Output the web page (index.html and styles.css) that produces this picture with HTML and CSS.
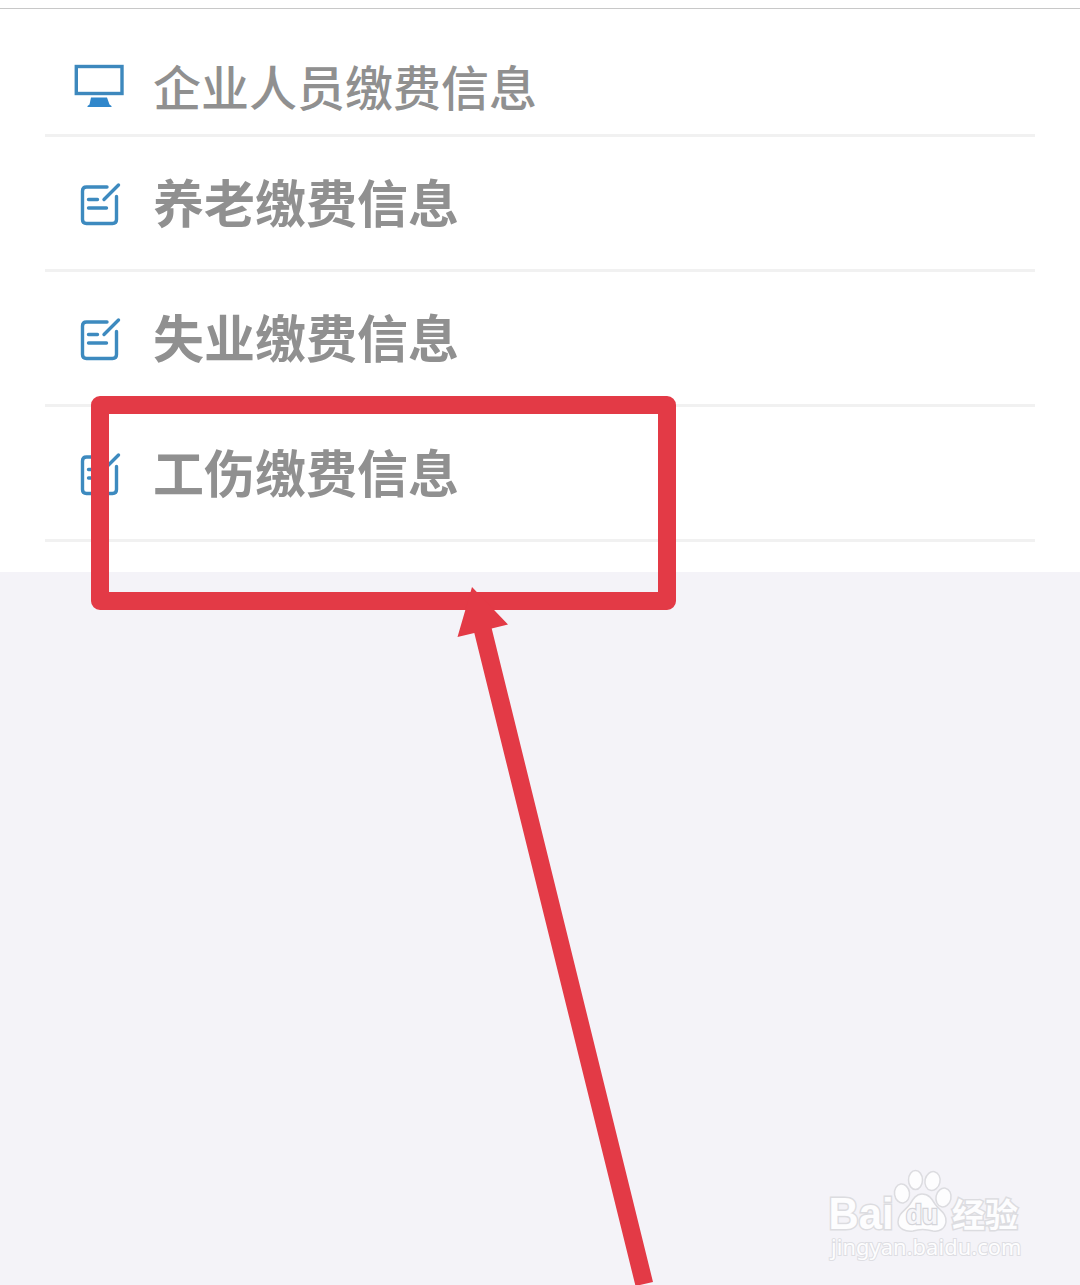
FILE: index.html
```html
<!DOCTYPE html>
<html lang="zh-CN">

<head>
    <meta charset="UTF-8">
    <meta name="viewport" content="width=device-width, initial-scale=1.0">
    <title>缴费信息</title>
    <link rel="stylesheet" href="styles.css">
</head>

<body>
    <svg class="symbols" width="0" height="0">
        <symbol id="icon-edit" viewBox="0 0 48 48">
            <path d="M30 6H9.500Q5.500 6 5.500 10V38.500Q5.500 42.500 9.500 42.500H35.500Q39.500 42.500 39.500 38.500V15.500" />
            <path d="M27 18.500L41.500 4M11.500 18.500H20.500M11.500 27H29.500" />
        </symbol>
    </svg>

    <div class="panel">
        <ul class="list">
            <li class="item title">
                <svg class="icon" viewBox="0 0 52 48">
                    <rect x="3.300" y="4.500" width="45.700" height="27" fill="none" stroke="#3d88bd" stroke-width="3.400" />
                    <path d="M18 35.500H34L36.500 42.500L38.500 44V45H14.500V44L16.500 42.500Z" fill="#3087cb" />
                </svg>
                <span>企业人员缴费信息</span>
            </li>
            <li class="item">
                <svg class="icon edit"><use href="#icon-edit" /></svg>
                <span>养老缴费信息</span>
            </li>
            <li class="item">
                <svg class="icon edit"><use href="#icon-edit" /></svg>
                <span>失业缴费信息</span>
            </li>
            <li class="item">
                <svg class="icon edit"><use href="#icon-edit" /></svg>
                <span>工伤缴费信息</span>
            </li>
        </ul>
    </div>

    <!-- 标注: 红框和箭头 -->
    <div class="mark"></div>
    <svg class="arrow" viewBox="0 0 200 700">
        <path d="M22 2L58 39.500L41.700 43.500L203 697L185.500 701L24.300 48L7.500 52Z" />
    </svg>

    <!-- 水印 -->
    <div class="watermark">
        <svg class="logo" viewBox="0 0 200 62">
            <text class="name" x="2.500" y="61" textLength="65" lengthAdjust="spacingAndGlyphs">Bai</text>
            <ellipse cx="76" cy="25.500" rx="7.500" ry="9.500" transform="rotate(-8 76 25.500)" />
            <ellipse cx="89.500" cy="12" rx="7" ry="9.500" />
            <ellipse cx="106.500" cy="13" rx="7.500" ry="9.500" transform="rotate(12 106.500 13)" />
            <ellipse cx="117.500" cy="29.500" rx="7.500" ry="9.500" transform="rotate(12 117.500 29.500)" />
            <path d="M96 26C103 26 106 31 109 36C113 42 121 45 120 54C119 61 113 64 107 63C100 61 93 61 87 63C80 64 72 61 72 54C72 45 80 42 84 36C87 31 90 26 96 26Z" />
            <text class="du" x="80" y="56" textLength="32" lengthAdjust="spacingAndGlyphs">du</text>
            <text class="cn" x="126" y="59" textLength="66" lengthAdjust="spacingAndGlyphs">经验</text>
        </svg>
        <p>jingyan.baidu.com</p>
    </div>
</body>

</html>
```
FILE: styles.css
```css
* {
    padding: 0;
    margin: 0;
    box-sizing: border-box;
}

body {
    position: relative;
    height: 1285px;
    padding-top: 8px;
    overflow: hidden;
    background: linear-gradient(#fff 8px, #f4f3f8 8px);
    font-family: "Noto Sans CJK SC", sans-serif;
}

.symbols {
    position: absolute;
}

.panel {
    height: 564px;
    padding: 0 45px;
    border-top: 1px solid #c8c8c8;
    background-color: #fff;
}

.list {
    list-style: none;
}

.item {
    display: flex;
    align-items: center;
    height: 135px;
    padding: 0 0 2px 28px;
    border-bottom: 3px solid #f1f1f1;
    color: #909090;
    font-size: 51px;
    font-weight: 700;
    line-height: 1;
}

.item span {
    margin-bottom: 1px;
}

.item.title {
    height: 128px;
    padding: 28px 0 0 28px;
    font-size: 48px;
    font-weight: 500;
}

.icon {
    width: 52px;
    height: 48px;
    margin-right: 28px;
}

.edit {
    width: 48px;
    margin: 5px 28px 0 4px;
    fill: none;
    stroke: #3d8abf;
    stroke-width: 3.4;
    stroke-linecap: round;
    stroke-linejoin: round;
}

.mark {
    position: absolute;
    left: 91px;
    top: 396px;
    width: 585px;
    height: 214px;
    border: 18px solid #e33a46;
    border-radius: 9px;
}

.arrow {
    position: absolute;
    left: 450px;
    top: 585px;
    width: 200px;
    height: 700px;
    overflow: visible;
    fill: #e33a46;
}

.watermark {
    position: absolute;
    left: 826px;
    top: 1168px;
    width: 200px;
}

.logo {
    display: block;
    width: 200px;
    height: 62px;
    overflow: visible;
    fill: #fdfdfe;
    stroke: #dcdce0;
    stroke-width: 1.5;
}

.logo text {
    font-family: "Liberation Sans", sans-serif;
    font-weight: 700;
    paint-order: stroke;
}

.logo .name {
    font-size: 44px;
    stroke-width: 3;
}

.logo .du {
    font-size: 27px;
    fill: #f6f6f9;
    stroke: #d4d4d9;
    stroke-width: 2.5;
}

.logo .cn {
    font-family: "Noto Sans CJK SC", sans-serif;
    font-size: 33px;
    stroke-width: 3;
}

.watermark p {
    margin-top: 7px;
    padding-left: 5px;
    color: #fdfdfe;
    font: 21.8px/20px "Noto Sans", sans-serif;
    letter-spacing: 0.1px;
    -webkit-text-stroke: 2px #dedee3;
    paint-order: stroke;
}
```
